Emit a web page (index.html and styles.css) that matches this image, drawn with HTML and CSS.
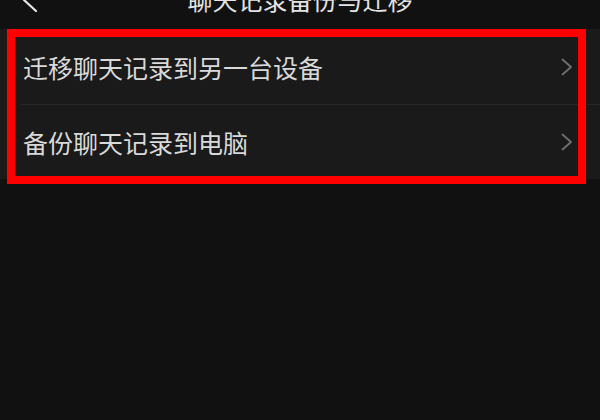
FILE: index.html
```html
<!DOCTYPE html>
<html lang="zh-CN">
<head>
<meta charset="utf-8">
<title>聊天记录备份与迁移</title>
<link rel="stylesheet" href="styles.css">
</head>
<body>
<header class="topbar">
  <svg class="back" width="16" height="26" viewBox="0 0 16 26"><polyline points="14,1 2,12 14,23" fill="none" stroke="#e6e6e6" stroke-width="2.2" stroke-linecap="round" stroke-linejoin="round"/></svg>
  <h1 class="title">聊天记录备份与迁移</h1>
</header>
<section class="list">
  <div class="row row-first">
    <span class="label">迁移聊天记录到另一台设备</span>
    <svg class="chev" width="12" height="18" viewBox="0 0 12 18"><polyline points="1.5,1.5 10,9 1.5,16.5" fill="none" stroke="#707070" stroke-width="1.8" stroke-linecap="round" stroke-linejoin="round"/></svg>
  </div>
  <div class="divider"></div>
  <div class="row row-second">
    <span class="label">备份聊天记录到电脑</span>
    <svg class="chev" width="12" height="18" viewBox="0 0 12 18"><polyline points="1.5,1.5 10,9 1.5,16.5" fill="none" stroke="#707070" stroke-width="1.8" stroke-linecap="round" stroke-linejoin="round"/></svg>
  </div>
  <div class="highlight"></div>
</section>
</body>
</html>
```
FILE: styles.css
```css
html, body {
  margin: 0;
  padding: 0;
  background: #111111;
  height: 100%;
  overflow: hidden;
}
body {
  font-family: "Noto Sans CJK SC", "Noto Sans", sans-serif;
  color: #dadada;
}
.topbar {
  position: relative;
  height: 42px;
  margin-top: -13px;
  display: flex;
  justify-content: center;
  align-items: flex-start;
  background: #111111;
}
.back {
  position: absolute;
  left: 22px;
  top: 1px;
}
.title {
  margin: 0;
  font-size: 25px;
  line-height: 25px;
  font-weight: normal;
  color: #e4e4e4;
}
.list {
  position: relative;
  background: #1a1a1a;
  display: flex;
  flex-direction: column;
}
.row {
  display: flex;
  align-items: center;
  justify-content: space-between;
  padding: 0 27px 0 23px;
}
.row-first {
  height: 75px;
}
.row-second {
  height: 74px;
}
.label {
  font-size: 25px;
  line-height: 30px;
  color: #d9d9d9;
}
.divider {
  height: 1px;
  margin-left: 20px;
  background: #272727;
}
.highlight {
  position: absolute;
  left: 7px;
  top: 0;
  width: 563px;
  height: 139px;
  border: 8px solid #fe0000;
}
```
